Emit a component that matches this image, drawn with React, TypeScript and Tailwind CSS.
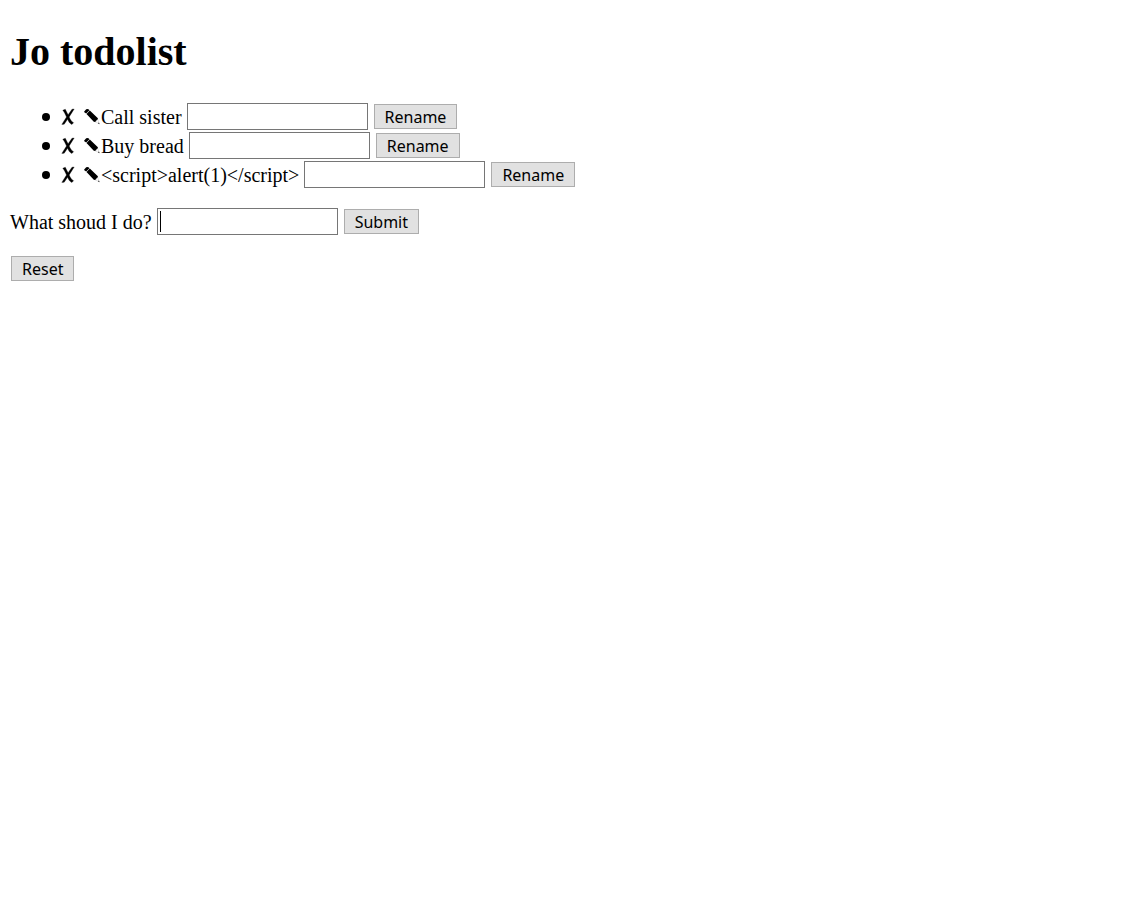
import { useState } from "react";

const inputClass =
  "h-[27px] w-[181px] border border-[#767676] bg-white px-1 text-base outline-none";
const buttonClass =
  "h-[25px] border border-[#adadad] bg-[#e1e1e1] px-2.5 pt-px font-['Noto_Sans',sans-serif] text-base leading-[22px]";

function CrossIcon() {
  return (
    <svg width="16" height="20" viewBox="0 0 16 20" aria-hidden="true">
      <path
        d="M1.8 3.2 L4.3 2.2 C5.4 4.2 6.2 6 7.1 7.8 L11 2.2 L13.2 2 L8.2 9.9 C9.2 12.2 10.4 14.5 12.6 15.7 L10.8 17.6 C8.8 16.6 7.6 14.6 6.6 12.3 L3.2 17.2 L0.8 17.4 L5.5 10 C4.4 7.4 3.4 5.2 1.8 3.2 Z"
        fill="black"
        stroke="black"
        strokeWidth="0.3"
      />
    </svg>
  );
}

function PencilIcon() {
  return (
    <svg width="17" height="20" viewBox="0 0 17 20" aria-hidden="true">
      <path d="M0.2 4.4 L2.2 2.2 Q3.8 1.4 4.9 2.6 L5.4 3.2 L2.2 6.6 L1 5.8 Q-0.1 5.2 0.2 4.4 Z" fill="black" />
      <path d="M2.5 7 L5.8 3.5 L13.9 11.2 L13.8 12.6 L12.6 12.9 L12.2 14.3 L10.8 14.9 L9.8 14.7 Z" fill="black" />
      <path d="M10.8 14.7 L15.2 16.8 L13.7 12.3" fill="none" stroke="#999999" strokeWidth="0.3" />
      <path d="M14 16.3 L14.9 15.4 L15.6 17.2 Z" fill="black" />
    </svg>
  );
}

function TodoItem({ name }: { name: string }) {
  return (
    <li className="flex items-center">
      <span className="mr-[11px] size-2 rounded-full bg-black" aria-hidden="true" />
      <a href="#delete" aria-label={`Delete ${name}`} className="mr-[7px]">
        <CrossIcon />
      </a>
      <a href="#edit" aria-label={`Edit ${name}`}>
        <PencilIcon />
      </a>
      <form className="flex items-center" onSubmit={(e) => e.preventDefault()}>
        <label className="flex items-center gap-[5px]">
          <span className="leading-[29px] -mb-0.5">{name}</span>
          <input type="text" className={inputClass} />
        </label>
        <button type="submit" className={`ml-1.5 ${buttonClass}`}>
          Rename
        </button>
      </form>
    </li>
  );
}

export default function App() {
  const [todo, setTodo] = useState("");
  const items = ["Call sister", "Buy bread", "<script>alert(1)</script>"];

  return (
    <main className="min-h-screen bg-white px-2.5 pt-7 font-['Liberation_Serif',serif] text-xl leading-[27px] text-black">
      <h1 className="text-[40px] leading-[48px] font-bold">Jo todolist</h1>
      <ul className="mt-[27px] flex flex-col gap-0.5 pl-8">
        {items.map((name) => (
          <TodoItem key={name} name={name} />
        ))}
      </ul>
      <form className="mt-5 flex items-center" onSubmit={(e) => e.preventDefault()}>
        <label htmlFor="todo" className="mr-[5px] -mb-0.5 leading-[29px]">
          What shoud I do?
        </label>
        <div className="relative flex">
          <input
            id="todo"
            type="text"
            value={todo}
            onChange={(e) => setTodo(e.target.value)}
            className={inputClass}
          />
          {todo === "" && (
            <span className="pointer-events-none absolute top-[3px] left-[3px] h-[21px] w-px bg-black" />
          )}
        </div>
        <button type="submit" className={`ml-1.5 ${buttonClass}`}>
          Submit
        </button>
      </form>
      <form className="mt-[21px] ml-px flex" onSubmit={(e) => e.preventDefault()}>
        <button type="submit" className={buttonClass}>
          Reset
        </button>
      </form>
    </main>
  );
}
